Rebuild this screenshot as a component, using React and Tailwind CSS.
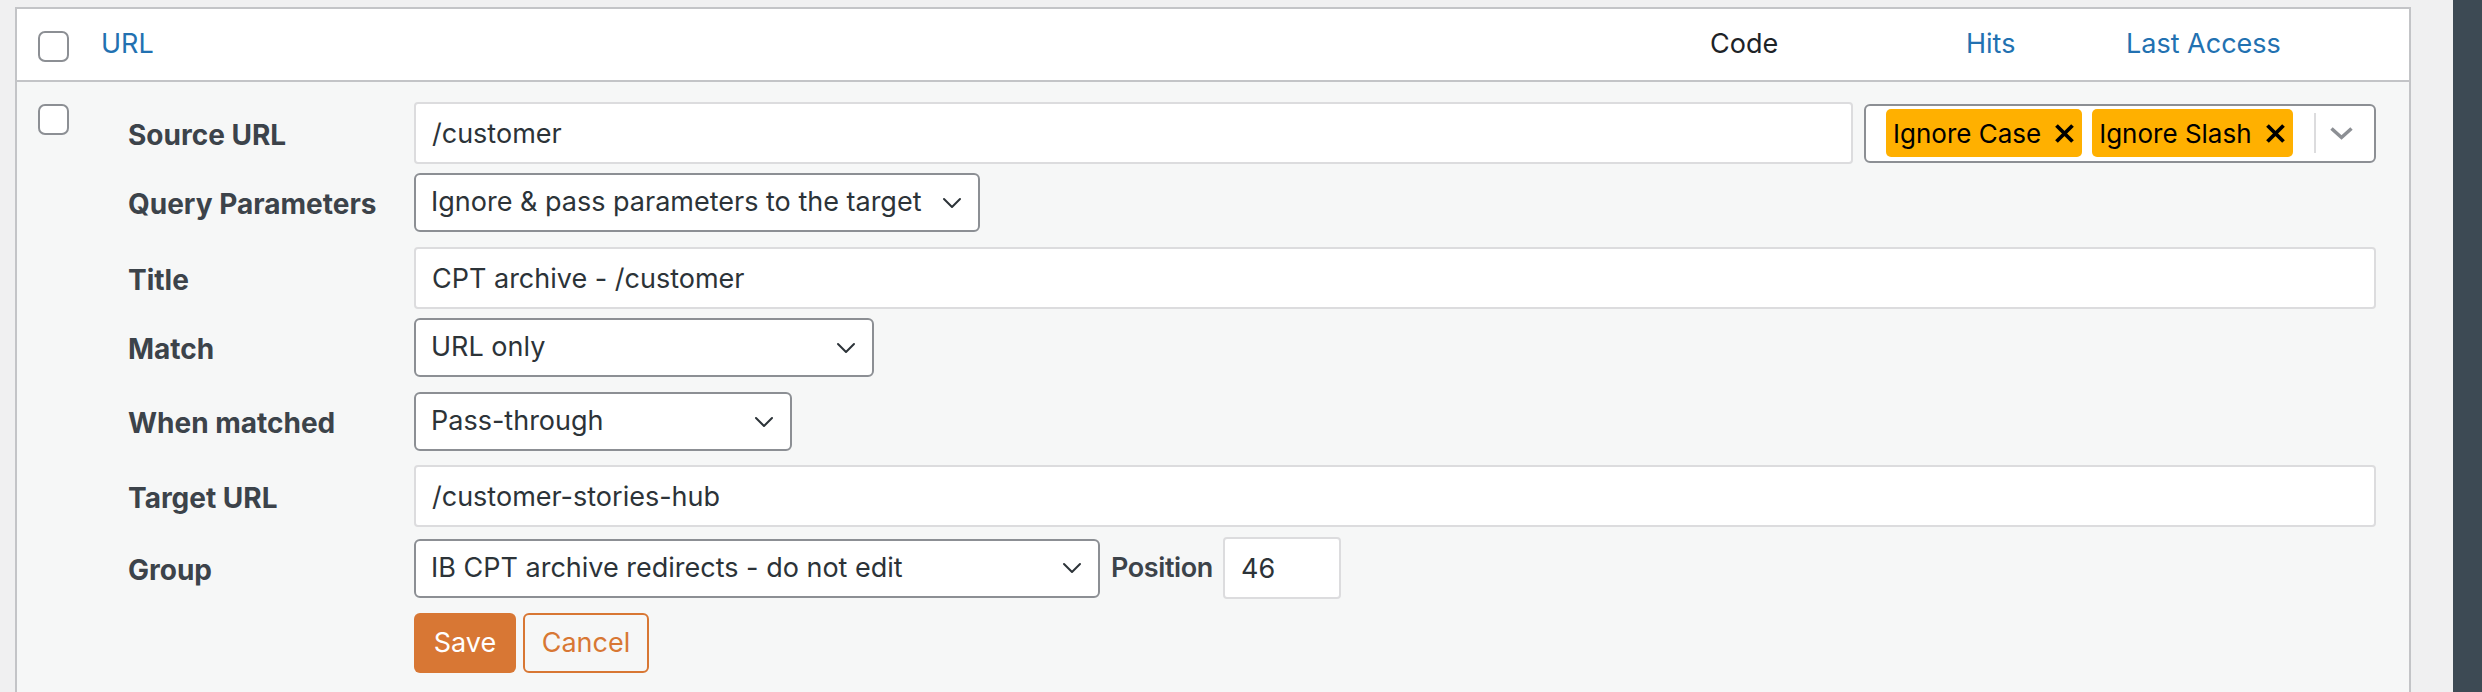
const Chevron = ({ className = '' }) => (
  <svg className={className} width="20" height="12" viewBox="0 0 20 12" fill="none">
    <path d="M2 2l8 8 8-8" stroke="#2c3338" strokeWidth="2" strokeLinecap="round" strokeLinejoin="round" />
  </svg>
)

function Checkbox() {
  return <span className="block w-[31px] h-[31px] rounded-[7px] border-2 border-[#8c8f94] bg-white" />
}

function Label({ children }) {
  return <div className="w-[286px] pt-[3px] flex-shrink-0 text-[28px] font-bold text-[#3c434a]">{children}</div>
}

function TextBox({ value, className = '' }) {
  return (
    <div className={`h-[62px] flex items-center pl-[16px] pt-[2px] bg-white border-2 border-[#dcdcde] rounded-[4px] text-[#2c3338] ${className}`}>
      {value}
    </div>
  )
}

function Select({ value, width }) {
  return (
    <div
      className={`h-[59px] flex items-center justify-between pl-[15px] pr-[16px] bg-white border-2 border-[#8c8f94] rounded-[6px] text-[#2c3338] flex-shrink-0 ${width}`}
    >
      <span className="truncate">{value}</span>
      <Chevron className="flex-shrink-0 ml-3" />
    </div>
  )
}

function Tag({ children }) {
  return (
    <span className="h-[48px] flex items-center pl-[7px] pr-[8px] bg-[#ffb000] rounded-[5px] text-black text-[26px]">
      {children}
      <svg className="ml-[14px]" width="19" height="19" viewBox="0 0 19 19">
        <path d="M1.5 1.5l16 16M17.5 1.5l-16 16" stroke="#000" strokeWidth="3.8" />
      </svg>
    </span>
  )
}

export default function App() {
  return (
    <div className="min-h-[692px] bg-[#f0f0f1] flex text-[27px] font-['Inter','Liberation_Sans',sans-serif]">
      <div className="flex-1 pl-[15px] pr-[42px] pt-[7px]">
        <div className="border-2 border-b-0 border-[#c3c4c7]">
          {/* header */}
          <div className="h-[73px] bg-white flex items-center border-b-2 border-[#c3c4c7]">
            <div className="w-[84px] pl-[21px] pt-[4px] flex-shrink-0">
              <Checkbox />
            </div>
            <div className="flex-1 text-[#2271b1]">URL</div>
            <div className="w-[256px] text-[#1d2327]">Code</div>
            <div className="w-[160px] text-[#2271b1]">Hits</div>
            <div className="w-[283px] text-[#2271b1]">Last Access</div>
          </div>

          {/* edit row */}
          <div className="bg-[#f6f7f7] flex pb-[40px]">
            <div className="w-[111px] pl-[21px] pt-[22px] flex-shrink-0">
              <Checkbox />
            </div>
            <div className="flex-1 pr-[33px] pt-[20px]">
              <div className="h-[62px] flex items-center">
                <Label>Source URL</Label>
                <TextBox value="/customer" className="flex-1" />
                <div className="ml-[11px] w-[512px] h-[59px] flex items-center pl-[20px] pr-[20px] bg-white border-2 border-[#8c8f94] rounded-[6px]">
                  <div className="flex gap-[10px]">
                    <Tag>Ignore Case</Tag>
                    <Tag>Ignore Slash</Tag>
                  </div>
                  <span className="ml-[21px] w-[2px] h-[40px] bg-[#dcdcde]" />
                  <svg className="ml-auto" width="25" height="14" viewBox="0 0 25 14" fill="none">
                    <path d="M2.5 2.5l10 9 10-9" stroke="#8c8f94" strokeWidth="3.5" />
                  </svg>
                </div>
              </div>

              <div className="mt-[9px] flex items-center">
                <Label>Query Parameters</Label>
                <Select value="Ignore & pass parameters to the target" width="w-[566px]" />
              </div>

              <div className="mt-[15px] flex items-center">
                <Label>Title</Label>
                <TextBox value="CPT archive - /customer" className="flex-1" />
              </div>

              <div className="mt-[9px] flex items-center">
                <Label>Match</Label>
                <Select value="URL only" width="w-[460px]" />
              </div>

              <div className="mt-[15px] flex items-center">
                <Label>When matched</Label>
                <Select value="Pass-through" width="w-[378px]" />
              </div>

              <div className="mt-[14px] flex items-center">
                <Label>Target URL</Label>
                <TextBox value="/customer-stories-hub" className="flex-1" />
              </div>

              <div className="mt-[10px] h-[62px] flex items-center">
                <Label>Group</Label>
                <Select value="IB CPT archive redirects - do not edit" width="w-[686px]" />
                <span className="ml-[11px] w-[101px] whitespace-nowrap font-semibold tracking-[-0.4px] text-[#3c434a]">Position</span>
                <TextBox value="46" className="ml-[11px] w-[118px]" />
              </div>

              <div className="mt-[14px] flex gap-[7px] pl-[286px]">
                <button className="h-[60px] w-[102px] rounded-[6px] bg-[#d87734] text-white">Save</button>
                <button className="h-[60px] w-[126px] rounded-[6px] border-2 border-[#d87734] text-[#d87734]">
                  Cancel
                </button>
              </div>
            </div>
          </div>
        </div>
      </div>
      <div className="w-[29px] bg-[#3d4a54]" />
    </div>
  )
}
